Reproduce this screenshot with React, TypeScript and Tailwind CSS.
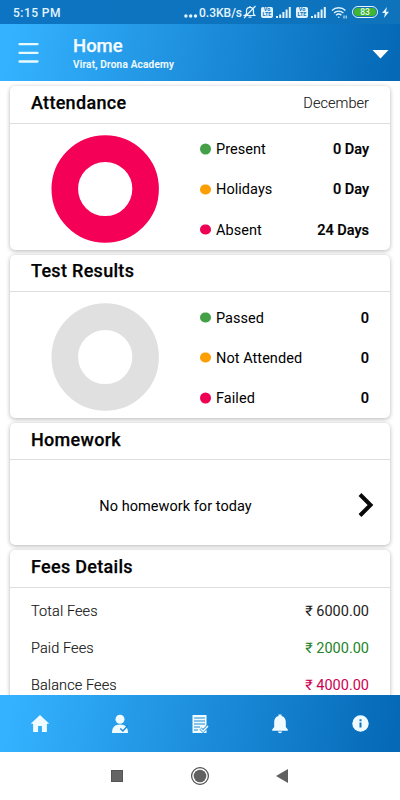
import React from "react";

function Donut({ color }: { color: string }) {
  return (
    <svg width="108" height="108" viewBox="0 0 108 108" className="ml-[41px] mt-[11.3px] shrink-0">
      <circle cx="54.2" cy="54" r="40.4" fill="none" stroke={color} strokeWidth="26.6" />
    </svg>
  );
}

function Card({ title, aside, height, children }: { title: string; aside?: string; height: string; children: React.ReactNode }) {
  return (
    <section className={`${height} w-full shrink-0 rounded-[5px] bg-white shadow-[0_1px_4px_rgba(0,0,0,0.3)]`}>
      <div className="flex h-[37.5px] items-center justify-between border-b border-[#dedede] pr-[21px] pb-[3px] pl-[21px]">
        <h2 className="text-[18px] font-medium leading-6 tracking-[0.3px] text-black [-webkit-text-stroke:0.25px_#111]">{title}</h2>
        {aside && <span className="pt-px text-[14.5px] font-light tracking-[0.05px] [-webkit-text-stroke:0.1px_#222]">{aside}</span>}
      </div>
      {children}
    </section>
  );
}

type Stat = { dot: string; label: string; value: string };

function Stats({ color, rows }: { color: string; rows: Stat[] }) {
  return (
    <div className="flex">
      <Donut color={color} />
      <div className="ml-[41px] mr-[21px] flex-1 pt-[5.7px]">
        {rows.map((r) => (
          <div key={r.label} className="flex h-[40.2px] items-center text-[14.5px] text-black">
            <i className={`mr-[5.5px] size-[10.5px] -translate-y-[0.5px] rounded-full ${r.dot}`} />
            <span className="flex-1 pt-px tracking-[0.05px]">{r.label}</span>
            <span className="pt-px font-medium [-webkit-text-stroke:0.2px_#000]">{r.value}</span>
          </div>
        ))}
      </div>
    </div>
  );
}

function Volte() {
  return (
    <span className="flex h-[11px] w-3 flex-col items-center justify-center rounded-[2px] bg-[#e0f4ff] text-[5.5px] font-bold leading-[5px] text-[#0d73bd]">
      <span>Vo</span>
      <span>LTE</span>
    </span>
  );
}

function Signal() {
  return (
    <svg width="15" height="11" viewBox="0 0 15 11" fill="#e0f4ff">
      <rect x="0" y="9" width="2" height="2" />
      <rect x="3.2" y="7.5" width="2" height="3.5" />
      <rect x="6.4" y="5" width="2" height="6" />
      <rect x="9.6" y="2.5" width="2" height="8.5" />
      <rect x="12.8" y="0" width="2" height="11" />
    </svg>
  );
}

function StatusBar() {
  return (
    <div className="flex h-6 shrink-0 items-center bg-gradient-to-r from-[#0c74c2] to-[#0e73bb] pr-[11px] pl-[13px] text-[12px] font-medium text-[#e4f5ff]">
      <span className="flex-1 pt-px tracking-[0.45px]">5:15 PM</span>
      <svg width="15" height="4" viewBox="0 0 15 4" fill="#e4f5ff" className="mt-[7px]">
        <circle cx="1.9" cy="2" r="1.7" /><circle cx="6.7" cy="2" r="1.7" /><circle cx="11.5" cy="2" r="1.7" />
      </svg>
      <span className="w-[44px] whitespace-nowrap pt-px text-[12px]">0.3KB/s</span>
      <svg width="14" height="14" viewBox="0 0 14 14" fill="none" stroke="#e4f5ff" strokeWidth="1.2" className="mr-[4px]">
        <path d="M1.500 10.500h10.300L10.500 9V5.500C10.400 3.500 9 2.400 7 2.400S3.600 3.500 3.500 5.500V9zM5.500 12.200h3M7 2.400V1M1 13 12.500 1" />
      </svg>
      <Volte />
      <span className="mr-[5px] ml-[3px]"><Signal /></span>
      <Volte />
      <span className="ml-[3px]"><Signal /></span>
      <svg width="17" height="13" viewBox="0 0 17 13" fill="none" stroke="#e4f5ff" strokeWidth="1.4" className="ml-[5px]">
        <path d="M1 4.400a10 10 0 0 1 13.400 0M3 6.900a7 7 0 0 1 9.400 0M5 9.200a4 4 0 0 1 5.400 0" />
        <circle cx="7.700" cy="11.200" r=".8" fill="#e4f5ff" stroke="none" />
        <path d="M13 9.500v3M15.200 9.500v3" strokeWidth="1" />
      </svg>
      <span className="ml-[4px] flex h-[12px] w-[26px] items-center justify-center rounded-full border border-[#e4f5ff] p-px">
        <span className="flex h-full w-full items-center justify-center rounded-full bg-[#41b52f] text-[8.5px] leading-none">83</span>
      </span>
      <svg width="7" height="11" viewBox="0 0 7 11" fill="#e4f5ff" className="ml-[4px]"><path d="M5 0 0 6h3L2 11l5-6.300H4z" /></svg>
    </div>
  );
}

function Header() {
  return (
    <header className="flex h-[57px] shrink-0 items-center bg-[linear-gradient(100deg,#34b2ff_3%,#0569b7_98%)] text-[#f4fcff]">
      <svg width="21" height="21" viewBox="0 0 21 21" stroke="#e6faff" strokeWidth="2.3" strokeLinecap="round" className="ml-[18px]">
        <path d="M1.500 2.200h18M1.500 10.900h18M1.500 19.500h18" />
      </svg>
      <div className="ml-[34px] flex-1 pt-[2px]">
        <h1 className="text-[18.5px] font-medium leading-[22px] [-webkit-text-stroke:0.25px_#f4fcff]">Home</h1>
        <p className="text-[10px] font-medium leading-[16px] tracking-[0.22px] [-webkit-text-stroke:0.15px_#f4fcff]">Virat, Drona Academy</p>
      </div>
      <svg width="17" height="9" viewBox="0 0 17 9" fill="#fff" className="mt-[3px] mr-[11px]"><path d="M.5 0h16l-8 8.500z" /></svg>
    </header>
  );
}

function TabBar() {
  return (
    <nav className="grid h-[57px] shrink-0 grid-cols-5 items-center justify-items-center bg-[linear-gradient(100deg,#34b2ff_3%,#0569b7_98%)]">
      <svg width="20" height="18" viewBox="0 0 20 18" fill="#f0fbff"><path d="M10 0 .7 8.800h2.400V17h5v-6h3.800v6h5V8.800h2.400z" /></svg>
      <svg width="18" height="20" viewBox="0 0 18 20" fill="#f0fbff">
        <circle cx="9" cy="5.200" r="4.500" />
        <path d="M1 19c0-5.500 2.500-8.500 8-8.500s8 3 8 8.500z" />
        <path d="m9.300 14.500 2.600 2.500 5-5.500" fill="none" stroke="#1b8bdc" strokeWidth="1.5" />
      </svg>
      <svg width="18" height="20" viewBox="0 0 18 20">
        <path d="M1.500 1h14v18h-14z" fill="#f0fbff" />
        <path d="M3 4h11M3 7h11M3 10h11M3 13h6M3 16h4" stroke="#1b8bd8" strokeWidth="1.1" />
        <path d="m9.500 14.500 2.600 2.500 4.900-5" fill="none" stroke="#1887d5" strokeWidth="3" />
        <path d="m9.500 14.500 2.600 2.700 4.900-5.200" fill="none" stroke="#f0fbff" strokeWidth="1.5" />
      </svg>
      <svg width="18" height="20" viewBox="0 0 18 20" fill="#f0fbff">
        <path d="M7.500 2V.5h3V2c3 .8 4.300 3 4.300 6v5l2 2.500v1.200H1.200v-1.200l2-2.500V8c0-3 1.300-5.200 4.300-6M7 17.600h4c0 2.200-4 2.200-4 0" />
      </svg>
      <svg width="17" height="17" viewBox="0 0 17 17"><circle cx="8.500" cy="8.500" r="8.200" fill="#f0fbff" /><path d="M7.500 4.200h2v2h-2zM7.500 7.500h2v5h-2z" fill="#0875c4" /></svg>
    </nav>
  );
}

function SystemNav() {
  return (
    <div className="flex h-12 shrink-0 items-center bg-white px-[111px]">
      <span className="size-3 bg-[#656565] outline outline-1 -outline-offset-1 outline-[#555]" />
      <svg width="20" height="20" viewBox="0 0 20 20" className="ml-[67px]"><circle cx="10" cy="10" r="8.400" fill="none" stroke="#4d4d4d" strokeWidth="1.2" /><circle cx="10" cy="10" r="6.300" fill="#616161" /></svg>
      <svg width="12" height="14" viewBox="0 0 12 14" className="ml-[65.5px]" fill="#606060"><path d="M12 0v14L0 7z" /></svg>
    </div>
  );
}

const fees = [
  { label: "Total Fees", value: "6000.00", tone: "text-[#222]" },
  { label: "Paid Fees", value: "2000.00", tone: "text-[#238429]" },
  { label: "Balance Fees", value: "4000.00", tone: "text-[#cf0050]" },
];

export default function App() {
  return (
    <div className="flex h-[800px] w-[400px] flex-col overflow-hidden bg-white font-['Roboto',sans-serif] text-[#111]">
      <StatusBar />
      <Header />
      <main className="flex min-h-0 flex-1 flex-col gap-[5px] overflow-hidden px-[10px] pt-[5.3px]">
        <Card title="Attendance" aside="December" height="h-[163.3px]">
          <Stats color="#f50057" rows={[
            { dot: "bg-[#43a047]", label: "Present", value: "0 Day" },
            { dot: "bg-[#fb9f05]", label: "Holidays", value: "0 Day" },
            { dot: "bg-[#ee0055]", label: "Absent", value: "24 Days" },
          ]} />
        </Card>
        <Card title="Test Results" height="h-[163.3px]">
          <Stats color="#e0e0e0" rows={[
            { dot: "bg-[#43a047]", label: "Passed", value: "0" },
            { dot: "bg-[#fb9f05]", label: "Not Attended", value: "0" },
            { dot: "bg-[#ee0055]", label: "Failed", value: "0" },
          ]} />
        </Card>
        <Card title="Homework" height="h-[122.3px]">
          <div className="flex h-[84px] items-center pt-[6px] pr-[16px] pl-[21px] text-[14.5px] text-black">
            <span className="flex-1 pt-[2px] pr-[38px] text-center tracking-[0.05px]">No homework for today</span>
            <svg width="16" height="24" viewBox="0 0 16 24" fill="none" stroke="#080808" strokeWidth="4"><path d="m2 1.500 10.500 10.500L2 22.500" /></svg>
          </div>
        </Card>
        <Card title="Fees Details" height="h-[180px]">
          <div className="px-[21px] pt-[6px] text-[14.5px]">
            {fees.map((f) => (
              <div key={f.label} className="flex h-[37px] items-center justify-between">
                <span className="font-light tracking-[0.1px] [-webkit-text-stroke:0.15px_#222]">{f.label}</span>
                <span className={f.tone}>₹ {f.value}</span>
              </div>
            ))}
          </div>
        </Card>
      </main>
      <TabBar />
      <SystemNav />
    </div>
  );
}
